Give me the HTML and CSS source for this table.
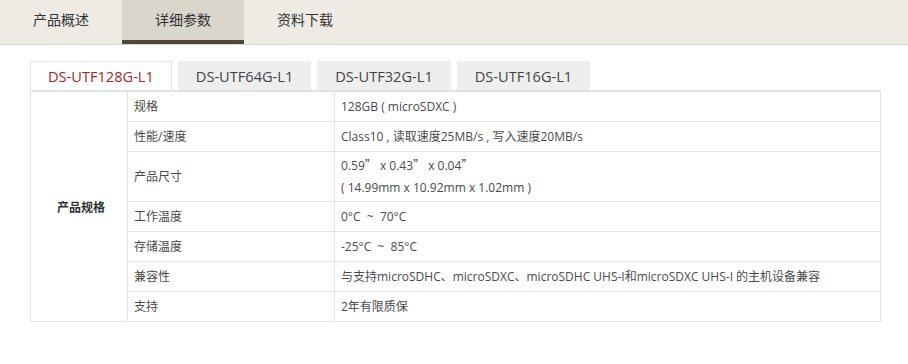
FILE: index.html
```html
<!DOCTYPE html>
<html lang="zh-CN">

<head>
    <meta charset="UTF-8">
    <meta content="width=device-width, initial-scale=1.0" name="viewport">
    <title>DS-UTF128G-L1 详细参数</title>
    <link rel="stylesheet" href="styles.css">
</head>

<body>

    <!-- 页面主导航 -->
    <div class="nav">
        <a class="nav-item" href="#">产品概述</a>
        <a class="nav-item active" href="#">详细参数</a>
        <a class="nav-item" href="#">资料下载</a>
    </div>

    <div class="content">
        <!-- 型号切换 -->
        <div class="models">
            <span class="model current">DS-UTF128G-L1</span>
            <span class="model">DS-UTF64G-L1</span>
            <span class="model">DS-UTF32G-L1</span>
            <span class="model">DS-UTF16G-L1</span>
        </div>

        <table class="spec">
            <colgroup>
                <col class="col-group">
                <col class="col-name">
                <col>
            </colgroup>
            <tbody>
                <tr>
                    <th rowspan="7">产品规格</th>
                    <td>规格</td>
                    <td>128GB ( microSDXC )</td>
                </tr>
                <tr>
                    <td>性能/速度</td>
                    <td>Class10 , 读取速度25MB/s , 写入速度20MB/s</td>
                </tr>
                <tr class="tall">
                    <td>产品尺寸</td>
                    <td>0.59<span class="cjk">”</span> x 0.43<span class="cjk">”</span> x 0.04<span class="cjk">”</span><br>( 14.99mm x 10.92mm x 1.02mm )</td>
                </tr>
                <tr>
                    <td>工作温度</td>
                    <td>0°C &nbsp;~ &nbsp;70°C</td>
                </tr>
                <tr>
                    <td>存储温度</td>
                    <td>-25°C &nbsp;~ &nbsp;85°C</td>
                </tr>
                <tr>
                    <td>兼容性</td>
                    <td>与支持microSDHC、microSDXC、microSDHC UHS-I和microSDXC UHS-I 的主机设备兼容</td>
                </tr>
                <tr>
                    <td>支持</td>
                    <td>2年有限质保</td>
                </tr>
            </tbody>
        </table>
    </div>

</body>

</html>
```

FILE: styles.css
```css
body {
    margin: 0;
    font-family: "Open Sans", "Noto Sans CJK SC", sans-serif;
    background: #fff;
    color: #444;
}

/* 主导航 */
.nav {
    display: flex;
    height: 44px;
    background: #edebe4;
    border-bottom: 1px solid #d9d7cf;
}

.nav-item {
    display: block;
    width: 122px;
    box-sizing: border-box;
    height: 44px;
    line-height: 40px;
    text-align: center;
    font-size: 14px;
    color: #333;
    text-decoration: none;
}

.nav-item.active {
    background: #d9d7cb;
    border-bottom: 4px solid #4b4739;
}

.content {
    padding: 16px 0 0 30px;
}

/* 型号切换 */
.models {
    display: flex;
    gap: 6px;
}

.model {
    height: 28px;
    line-height: 28px;
    padding: 0 17px;
    font-size: 14.6px;
    color: #444;
    background: #eee;
    border: 1px solid #eee;
    border-bottom: none;
}

.model.current {
    background: #fff;
    border-color: #e3e3e3;
    color: #a5262c;
}

/* 参数表 */
.spec {
    width: 851px;
    border-collapse: collapse;
    font-size: 12px;
    border: 1px solid #dedede;
    border-top: 2px solid #e2e2e2;
}

.col-group {
    width: 97px;
}

.col-name {
    width: 207px;
}

.spec th {
    padding-left: 5px;
    font-weight: bold;
    color: #333;
    border: 1px solid #e3e3e3;
}

.spec td {
    height: 25px;
    padding: 2px 6px;
    line-height: 22px;
    border: 1px solid #e3e3e3;
    text-align: left;
    color: #4a4a4a;
}

.spec tr.tall td {
    height: auto;
}

/* 全角符号 */
.cjk {
    font-family: "Noto Sans CJK SC", sans-serif;
}
```
